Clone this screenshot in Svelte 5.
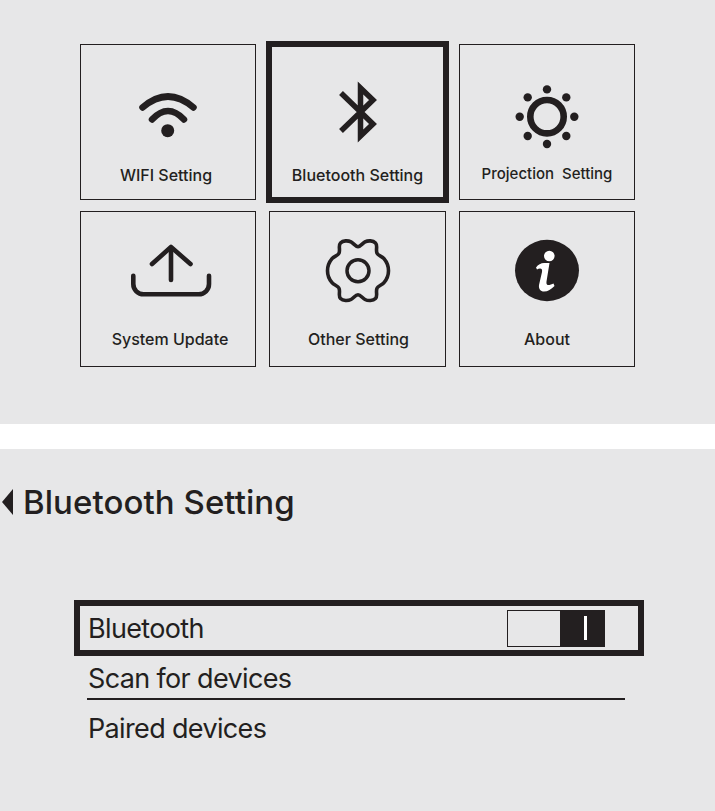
<script lang="ts">
  // Two settings screens stacked: the menu grid, then the Bluetooth page.
  let bluetoothOn = $state(true);
</script>

<main class="page">
  <section class="menu">
    <div class="grid">
      <div class="card top">
        <svg class="icon" viewBox="0 0 100 70" aria-hidden="true">
          <g fill="none" stroke="currentColor" stroke-width="6.500" stroke-linecap="round">
            <path d="M24.500 27.500Q50 5.500 75.500 27.500" />
            <path d="M34 39.500Q50 22.500 66 39.500" />
          </g>
          <circle cx="49.700" cy="50.700" r="6.500" fill="currentColor" />
        </svg>
        <span class="label wifi">WIFI Setting</span>
      </div>

      <div class="card top selected">
        <svg class="icon" viewBox="0 0 100 70" aria-hidden="true">
          <path
            d="M33 13L65 44L52.500 56V8L65 20L33 51"
            fill="none"
            stroke="currentColor"
            stroke-width="5.500"
          />
        </svg>
        <span class="label">Bluetooth Setting</span>
      </div>

      <div class="card top">
        <svg class="icon" viewBox="0 0 100 70" aria-hidden="true">
          <circle cx="50" cy="36.700" r="16.700" fill="none" stroke="currentColor" stroke-width="6.600" />
          <g fill="currentColor">
            <circle cx="50" cy="9.400" r="4.200" />
            <circle cx="50" cy="64" r="4.200" />
            <circle cx="22.700" cy="36.700" r="4.200" />
            <circle cx="77.300" cy="36.700" r="4.200" />
            <circle cx="30.700" cy="17.400" r="4.200" />
            <circle cx="69.300" cy="17.400" r="4.200" />
            <circle cx="30.700" cy="56" r="4.200" />
            <circle cx="69.300" cy="56" r="4.200" />
          </g>
        </svg>
        <span class="label narrow">Projection  Setting</span>
      </div>

      <div class="card low">
        <svg class="icon" viewBox="0 0 100 70" aria-hidden="true">
          <g fill="none" stroke="currentColor" stroke-width="4.600" stroke-linecap="round" stroke-linejoin="round">
            <path d="M53 44V12" />
            <path d="M34 28L53 11L72.500 28" />
            <path d="M15.300 39.700V48A10.300 10.300 0 0 0 25.600 58.300H80.700A10.300 10.300 0 0 0 91 48V39.700" />
          </g>
        </svg>
        <span class="label update">System Update</span>
      </div>

      <div class="card low">
        <svg class="icon" viewBox="0 0 100 70" aria-hidden="true">
          <g transform="translate(50 34.700)" fill="none" stroke="currentColor" stroke-width="3.600">
            <path
              d="M0 -24C2.500 -24 4.500 -27.500 7 -28.800C10 -30.300 15 -30.300 17.500 -27.800C20 -25.300 17.500 -21 19 -17.500C20 -15 24 -14.500 26 -12C28.500 -9 30.500 -5 30.500 0C30.500 5 28.500 9 26 12C24 14.500 20 15 19 17.500C17.500 21 20 25.300 17.500 27.800C15 30.300 10 30.300 7 28.800C4.500 27.500 2.500 24 0 24C-2.500 24 -4.500 27.500 -7 28.800C-10 30.300 -15 30.300 -17.500 27.800C-20 25.300 -17.500 21 -19 17.500C-20 15 -24 14.500 -26 12C-28.500 9 -30.500 5 -30.500 0C-30.500 -5 -28.500 -9 -26 -12C-24 -14.500 -20 -15 -19 -17.500C-17.500 -21 -20 -25.300 -17.500 -27.800C-15 -30.300 -10 -30.300 -7 -28.800C-4.500 -27.500 -2.500 -24 0 -24Z"
            />
            <circle r="11" stroke-width="3.500" />
          </g>
        </svg>
        <span class="label other">Other Setting</span>
      </div>

      <div class="card low">
        <svg class="icon" viewBox="0 0 100 70" aria-hidden="true">
          <ellipse cx="50" cy="34.500" rx="32" ry="30.700" fill="currentColor" />
          <circle cx="52.300" cy="20" r="5.300" fill="#fff" />
          <path
            d="M39 31.500C41 28.500 44 27 47 27H52.500L49.500 45.500C49 48.500 50.500 49.500 52.500 49C54 48.600 55.500 48 56.500 47.500L57.500 50C54 53.500 51 55.500 47 55.500C43.500 55.500 41.500 53 42 49L45 36C45.500 33.500 44.500 32.500 43 32.500C42 32.500 41 33 40 33.500Z"
            fill="#fff"
          />
        </svg>
        <span class="label">About</span>
      </div>
    </div>
  </section>

  <section class="bluetooth">
    <header class="head">
      <span class="back"></span>
      <h1>Bluetooth Setting</h1>
    </header>

    <div class="row switch-row">
      <span>Bluetooth</span>
      <button class="toggle" type="button" aria-label="Bluetooth" aria-pressed={bluetoothOn}>
        <span class="off"></span>
        <span class="on"><i></i></span>
      </button>
    </div>
    <div class="row scan">Scan for devices</div>
    <div class="row paired">Paired devices</div>
  </section>
</main>

<style>
  :global(body) {
    background: #fff;
  }
  .page {
    width: 715px;
    height: 811px;
    display: flex;
    flex-direction: column;
    gap: 25px;
    font-family: Inter, "Liberation Sans", sans-serif;
    color: #231f20;
    overflow: hidden;
  }
  section {
    background: #e7e7e8;
  }
  .menu {
    height: 424px;
    padding: 44px 80px 0;
    box-sizing: border-box;
  }
  .grid {
    display: grid;
    grid-template-columns: 176px 176.500px 176px;
    grid-auto-rows: 156px;
    justify-content: space-between;
    row-gap: 11px;
  }
  .card {
    box-sizing: border-box;
    border: 1px solid #231f20;
    display: flex;
    flex-direction: column;
    align-items: center;
  }
  .card.top {
    padding-top: 35px;
  }
  .card.low {
    padding-top: 24px;
  }
  .card.selected {
    border-color: transparent;
    outline: 6px solid #231f20;
    outline-offset: -3px;
  }
  .icon {
    width: 100px;
    height: 70px;
    flex: none;
    overflow: visible;
  }
  .label {
    font-size: 16px;
    font-weight: 500;
    line-height: 20px;
    white-space: pre;
  }
  .top .label {
    margin-top: 15px;
  }
  .low .label {
    margin-top: 23px;
  }
  .label.wifi {
    transform: translateX(-2px);
  }
  .label.update {
    transform: translateX(2px);
  }
  .label.other {
    transform: translateX(1px);
  }
  .label.narrow {
    font-size: 15px;
    transform: translateY(-1px);
  }
  .bluetooth {
    flex: 1;
    min-height: 0;
    font-size: 27px;
    letter-spacing: -0.65px;
  }
  .head {
    display: flex;
    align-items: center;
    gap: 10px;
    padding: 33px 0 0 2px;
    height: 40px;
  }
  .back {
    width: 0;
    height: 0;
    border-style: solid;
    border-width: 13px 11px 13px 0;
    border-color: transparent #231f20 transparent transparent;
  }
  h1 {
    margin: 0;
    font-size: 33px;
    font-weight: 500;
    line-height: 40px;
    letter-spacing: 0.06px;
  }
  .row {
    box-sizing: border-box;
    line-height: 40px;
  }
  .switch-row {
    display: flex;
    align-items: center;
    justify-content: space-between;
    height: 56px;
    margin: 78px 71px 0 74px;
    padding: 0 33px 0 8px;
    border: 6px solid #231f20;
  }
  .switch-row > span {
    padding-top: 1px;
  }
  .toggle {
    display: flex;
    width: 98px;
    height: 37px;
    padding: 0;
    border: 1px solid #231f20;
    background: transparent;
  }
  .off {
    flex: 1;
  }
  .on {
    width: 44px;
    display: flex;
    align-items: center;
    justify-content: center;
    background: #231f20;
  }
  .on i {
    width: 3px;
    height: 24px;
    margin-left: 6px;
    background: #fff;
  }
  .scan {
    height: 44px;
    margin: 0 90px 0 87px;
    padding-top: 3px;
    padding-left: 1px;
    border-bottom: 2px solid #231f20;
  }
  .paired {
    margin: 9px 0 0 88px;
  }
</style>
